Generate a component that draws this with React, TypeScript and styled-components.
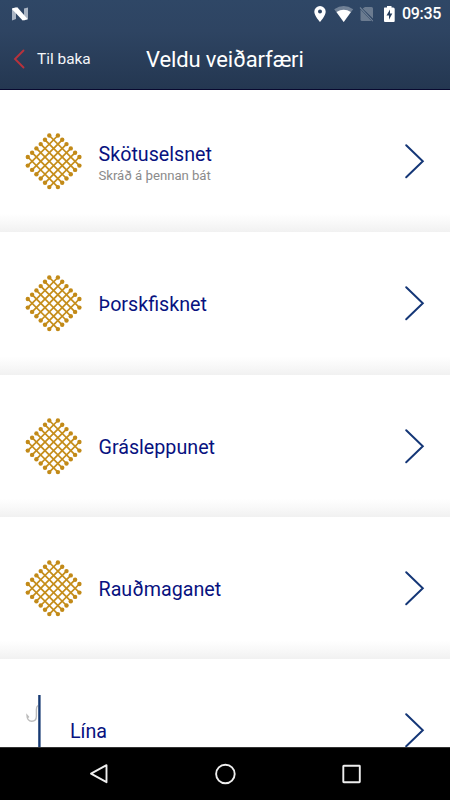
import React from "react";
import styled, { createGlobalStyle } from "styled-components";

const GlobalStyle = createGlobalStyle`
  * { box-sizing: border-box; }
  body { margin: 0; font-family: Roboto, sans-serif; background: #fff; }
`;

const Screen = styled.div`
  width: 450px;
  height: 800px;
  overflow: hidden;
  display: flex;
  flex-direction: column;
  background: #fff;
`;

const Header = styled.header`
  flex: none;
  height: 90px;
  color: #fff;
  background: linear-gradient(#2f4766 0%, #2e4462 35%, #243751 100%);
  border-bottom: 1px solid #08082f;
`;

const StatusBar = styled.div`
  height: 28px;
  padding: 0 9px 0 11px;
  display: flex;
  align-items: center;
  justify-content: space-between;
`;

const StatusIcons = styled.div`
  display: flex;
  align-items: center;
`;

const Clock = styled.span`
  width: 39px;
  margin-left: 7px;
  font-size: 16px;
  font-weight: 500;
  line-height: 26px;
  letter-spacing: -0.3px;
  white-space: nowrap;
`;

const TitleBar = styled.div`
  height: 62px;
  display: grid;
  grid-template-columns: 146px 158px 1fr;
  align-items: center;
`;

const BackButton = styled.button`
  display: flex;
  align-items: center;
  gap: 12px;
  padding: 0 0 0 13px;
  border: 0;
  background: none;
  color: #f4f6f9;
  font: 400 15.4px/20px Roboto, sans-serif;
`;

const Title = styled.h1`
  margin: 0;
  padding-top: 1px;
  font-size: 22px;
  font-weight: 400;
  line-height: 28px;
  letter-spacing: -0.12px;
  white-space: nowrap;
`;

const List = styled.main`
  flex: 1;
  min-height: 0;
  overflow: hidden;
`;

const Row = styled.div<{ $narrow?: boolean }>`
  height: 142.25px;
  padding: 0 24px 0 26px;
  display: grid;
  grid-template-columns: ${(p) => (p.$narrow ? "14px" : "56px")} 1fr 22px;
  column-gap: ${(p) => (p.$narrow ? "30px" : "16.5px")};
  align-items: center;
  background: linear-gradient(#fff 0%, #fff 87%, #f9f9f9 93%, #f1f1f1 100%);
`;

const Label = styled.div<{ $withNote?: boolean }>`
  font-size: 19.7px;
  line-height: ${(p) => (p.$withNote ? "25px" : "26px")};
  padding-top: ${(p) => (p.$withNote ? "3px" : "4px")};
  color: #08127f;
`;

const Note = styled.div`
  font-size: 13.2px;
  line-height: 17px;
  letter-spacing: -0.05px;
  color: #8b8b8b;
`;

const NavBar = styled.nav`
  flex: none;
  height: 53px;
  padding: 0 87px 0 88px;
  display: flex;
  align-items: center;
  justify-content: space-between;
  background: #000;
  border-top: 1px solid #333;
`;

const IconSvg = styled.svg`
  overflow: visible;
`;

const STEP = 4.3;
const strands = [0, 1, 2, 3, 4, 5].map((k) => ({
  x1: -STEP * (k + 1),
  y1: -STEP * (6 - k),
  x2: STEP * (6 - k),
  y2: STEP * (k + 1),
}));

const NetIcon = () => (
  <IconSvg width="56" height="56" viewBox="-28 -28 56 56" fill="#c28a18" stroke="#c58d1a">
    {[1, -1].map((side) => (
      <g key={side} transform={`translate(-.4 .3) scale(${side} 1)`}>
        {strands.map((s) => (
          <g key={s.x1}>
            <line {...s} strokeWidth="1.75" />
            <circle cx={s.x1} cy={s.y1} r="2.2" stroke="none" />
            <circle cx={s.x2} cy={s.y2} r="2.2" stroke="none" />
          </g>
        ))}
      </g>
    ))}
  </IconSvg>
);

const LineIcon = () => (
  <IconSvg width="14" height="70" viewBox="0 0 14 70" fill="none">
    <path d="M12 10.5C10.4 11.5 10.4 12.5 10.4 14.5V21C10.4 24.5 8.7 26.2 5.8 26.2C2.7 26.2 1 24 1 20.2L2.9 22.5" stroke="#bcbcbc" strokeWidth="1.4" />
    <path d="M13.4 0V70" stroke="#173a73" strokeWidth="2.4" />
  </IconSvg>
);

const Chevron = () => (
  <svg width="22" height="36" viewBox="0 0 22 36" fill="none">
    <path d="M2.2 2.2L18.8 18.2L2.2 34.2" stroke="#153777" strokeWidth="2" strokeLinecap="round" />
  </svg>
);

const gear = [
  { name: "Skötuselsnet", note: "Skráð á þennan bát" },
  { name: "Þorskfisknet" },
  { name: "Grásleppunet" },
  { name: "Rauðmaganet" },
  { name: "Lína", line: true },
];

export default function App() {
  return (
    <>
      <GlobalStyle />
      <Screen>
        <Header>
          <StatusBar>
            <svg width="18" height="14" viewBox="0 0 18 14">
              <path d="M1 1.5L5 .5V12L1 13.5Z" fill="#a9b4c3" />
              <path d="M13 1.5L17 .5V12L13 13.5Z" fill="#a9b4c3" />
              <path d="M1.3 1.2L6.3 .2L16.8 12.2L11.7 13.5L1.3 2.5Z" fill="#fff" />
            </svg>
            <StatusIcons>
              <svg width="62" height="18" viewBox="0 0 62 18">
                <path fillRule="evenodd" d="M9 1A5.7 5.7 0 0 0 3.3 6.7C3.3 10.8 9 17 9 17S14.7 10.8 14.7 6.7A5.7 5.7 0 0 0 9 1ZM9 4.5A2 2 0 1 1 9 8.5A2 2 0 0 1 9 4.5Z" fill="#fff" />
                <path d="M23.2 4.3Q32.7-2.2 42.2 4.3L32.7 17Z" fill="#718196" />
                <path d="M25.5 7Q32.7 2.6 39.9 7L32.7 17Z" fill="#fff" />
                <path d="M54 2H60.5Q62 2 62 3.5V13.5L51.6 3.6Z" fill="#6b7b90" />
                <path d="M49.5 4.5L60.5 16H51Q49.5 16 49.5 14.5Z" fill="#6b7b90" />
                <path d="M49 2.5L62 16.2" stroke="#718196" strokeWidth="1.1" />
              </svg>
              <svg width="22" height="18" viewBox="0 0 22 18">
                <path d="M11.5 2.5H14V1H18.5V2.5H20.2Q21.7 2.5 21.7 4V16Q21.7 17 20.7 17H12Q11 17 11 16V3.5Q11 2.5 11.5 2.5Z" fill="#fff" />
                <path d="M17 4.5L13.5 10.5H16V14.8L19.3 8.5H17Z" fill="#263e5d" />
              </svg>
              <Clock>09:35</Clock>
            </StatusIcons>
          </StatusBar>
          <TitleBar>
            <BackButton>
              <svg width="12" height="20" viewBox="0 0 12 20" fill="none">
                <path d="M10.5 1.5L2 10L10.5 18.5" stroke="#b8323c" strokeWidth="1.9" strokeLinecap="round" />
              </svg>
              Til baka
            </BackButton>
            <Title>Veldu veiðarfæri</Title>
          </TitleBar>
        </Header>
        <List>
          {gear.map((item) => (
            <Row key={item.name} $narrow={item.line}>
              {item.line ? <LineIcon /> : <NetIcon />}
              <div>
                <Label $withNote={!!item.note}>{item.name}</Label>
                {item.note && <Note>{item.note}</Note>}
              </div>
              <Chevron />
            </Row>
          ))}
        </List>
        <NavBar>
          <svg width="22" height="22" viewBox="0 0 22 22" fill="none">
            <path d="M18.5 2.2V19.2L3 10.7Z" stroke="#eee" strokeWidth="1.9" strokeLinejoin="round" />
          </svg>
          <svg width="22" height="22" viewBox="0 0 22 22" fill="none">
            <circle cx="10.4" cy="11" r="9.3" stroke="#eee" strokeWidth="1.9" />
          </svg>
          <svg width="22" height="22" viewBox="0 0 22 22" fill="none">
            <rect x="2.3" y="2.7" width="16.5" height="16.5" rx=".5" stroke="#eee" strokeWidth="1.9" />
          </svg>
        </NavBar>
      </Screen>
    </>
  );
}
